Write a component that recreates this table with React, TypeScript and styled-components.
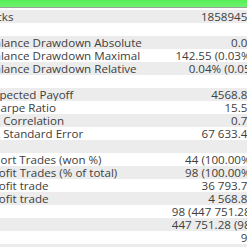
import styled, { createGlobalStyle } from 'styled-components';

const Global = createGlobalStyle`
    html, body {
        margin: 0;
        padding: 0;
        background: #ffffff;
        overflow: hidden;
    }
`;

type Row = {
    label?: string
    value?: string
}

const rows: Row[] = [
    { label: 'Ticks', value: '18589457' },
    {},
    { label: 'Balance Drawdown Absolute', value: '0.00' },
    { label: 'Balance Drawdown Maximal', value: '142.55 (0.03%)' },
    { label: 'Balance Drawdown Relative', value: '0.04% (0.05)' },
    {},
    { label: 'Expected Payoff', value: '4568.82' },
    { label: 'Sharpe Ratio', value: '15.52' },
    { label: 'LR Correlation', value: '0.79' },
    { label: 'LR Standard Error', value: '67 633.49' },
    {},
    { label: 'Short Trades (won %)', value: '44 (100.00%)' },
    { label: 'Profit Trades (% of total)', value: '98 (100.00%)' },
    { label: 'Profit trade', value: '36 793.70' },
    { label: 'Profit trade', value: '4 568.82' },
    { value: '98 (447 751.28)' },
    { value: '447 751.28 (98)' },
    { value: '98' },
    {},
];

const Wrapper = styled.div`
    width: 247px;
    height: 247px;
    overflow: hidden;
    background: #ffffff;
    font-family: "Open Sans", "Noto Sans", sans-serif;
    font-size: 11.6px;
    color: #444444;
`;

const ProgressBar = styled.div`
    height: 7px;
    background: linear-gradient(#56ee56, #70f270);
    border-bottom: 1px solid #9aa29a;
`;

const Table = styled.div`
    display: flex;
    flex-direction: column;
    margin-top: 2px;
    margin-left: -13px;
    width: 273px;
`;

const Line = styled.div<{ $shaded: boolean }>`
    height: 13px;
    display: flex;
    align-items: center;
    justify-content: space-between;
    padding-right: 6px;
    background: ${props => props.$shaded ? '#ececec' : '#ffffff'};
    white-space: nowrap;
    line-height: 13px;
`;

const Label = styled.span`
    color: #404040;
`;

const Value = styled.span`
    color: #404040;
    text-align: right;
`;

const App = () => {
    return (
        <Wrapper>
            <Global />
            <ProgressBar />
            <Table>
                {rows.map((row, i) => (
                    <Line key={i} $shaded={i % 2 === 0}>
                        <Label>{row.label}</Label>
                        <Value>{row.value}</Value>
                    </Line>
                ))}
            </Table>
        </Wrapper>
    )
}

export default App;
